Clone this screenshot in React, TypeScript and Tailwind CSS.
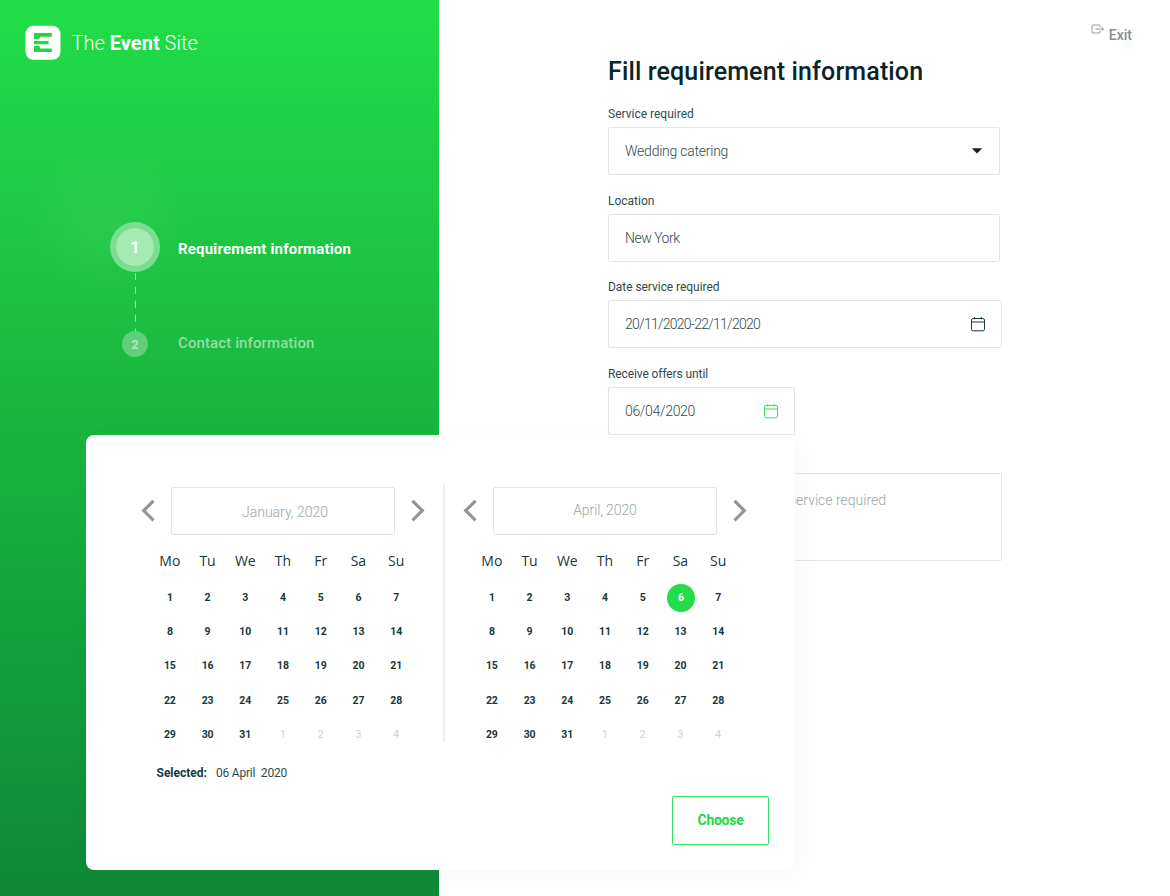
import type { ReactNode } from "react";

const weekdays = ["Mo", "Tu", "We", "Th", "Fr", "Sa", "Su"];
const days = Array.from({ length: 35 }, (_, i) => (i < 31 ? i + 1 : i - 30));

function LogoMark() {
  return (
    <svg width="36" height="35" viewBox="0 0 36 35" className="block shrink-0">
      <rect x="0.5" y="0.8" width="35" height="34" rx="8" fill="#fff" />
      <path
        d="M9 8H26.8V11.8H15.3L14.2 14.2H9ZM9 15.9H23.6V19.3H9ZM9 20.9H14.2L15.3 23.5H26.8V27.1H9Z"
        fill="#22d546"
      />
    </svg>
  );
}

function CalendarIcon({ className }: { className: string }) {
  return (
    <svg width="16" height="16" viewBox="0 0 16 16" fill="none" stroke="currentColor" className={className}>
      <rect x="1.5" y="2.5" width="13" height="12.3" rx="1.6" strokeWidth="1" />
      <path d="M1.5 6H14.5M4.7 1V3.4M11.3 1V3.4" strokeWidth="1" />
    </svg>
  );
}

function Chevron({ next }: { next?: boolean }) {
  return (
    <svg width="14" height="22" viewBox="0 0 14 22" fill="none" stroke="#9b948e" strokeWidth="3.2" className="block shrink-0">
      <path d={next ? "M1.5 0.8L11.3 10.6L1.5 20.4" : "M12.5 0.8L2.7 10.6L12.5 20.4"} />
    </svg>
  );
}

function Field({ label, labelClass, className, children }: { label: string; labelClass: string; className: string; children: ReactNode }) {
  return (
    <div className="mb-[12.5px]">
      <div className={`h-[26px] pt-[4px] text-[12px] leading-[18px] text-[#304a4c] ${labelClass}`}>{label}</div>
      <div className={`flex h-[48px] items-center justify-between rounded-[2px] border border-[#e3e5e5] pl-[16px] text-[14px] leading-5 font-light text-[#304a4c] ${className}`}>
        {children}
      </div>
    </div>
  );
}

function Month({ title, titleClass, selected }: { title: string; titleClass: string; selected?: number }) {
  return (
    <div className="w-[284px]">
      <div className="flex items-center justify-between">
        <Chevron />
        <div className={`flex h-[48px] w-[224px] items-center justify-center rounded-[2px] border border-[#e3e5e5] text-[14px] font-light text-[#98a5a5] ${titleClass}`}>
          {title}
        </div>
        <Chevron next />
      </div>
      <div className="ml-[10px] grid w-[264px] grid-cols-7 pt-[9px] text-center">
        {weekdays.map((d) => (
          <div key={d} className="h-[37px] pt-[7px] font-['Open_Sans',sans-serif] text-[14px] leading-5 font-medium text-[#18383b]">
            {d}
          </div>
        ))}
        {days.map((d, i) => (
          <div key={i} className={`flex h-[34.25px] items-center justify-center text-[10.5px] tracking-[-0.1px] ${i > 30 ? "font-normal text-[#ccd2d2]" : "font-bold text-[#18383b]"}`}>
            {selected === i ? (
              <span className="ml-px flex size-7 shrink-0 items-center justify-center rounded-full bg-[#22dc48] text-white">{d}</span>
            ) : (
              d
            )}
          </div>
        ))}
      </div>
    </div>
  );
}

export default function App() {
  return (
    <div className="relative flex h-[896px] w-[1170px] overflow-hidden bg-white font-['Roboto',sans-serif]">
      <aside className="h-full w-[439px] shrink-0 bg-[radial-gradient(circle_at_108px_222px,rgba(255,255,255,0.055),transparent_80px),linear-gradient(#22dd48,#0e8936)] text-white">
        <div className="flex items-center pt-[25px] pl-[25px]">
          <LogoMark />
          <span className="ml-[10.5px] text-[20px] leading-8 font-light tracking-[0.03px] whitespace-pre">
            The <b className="font-bold">Event</b> Site
          </span>
        </div>
        <div className="mt-[162px] ml-[110px] flex items-start">
          <div className="flex w-[50px] flex-col items-center">
            <div className="flex size-[50px] items-center justify-center rounded-full bg-[#7cdd91]">
              <div className="flex size-[38px] items-center justify-center rounded-full bg-[#a5e9b3] pt-px text-[16px] font-bold">1</div>
            </div>
            <svg width="1" height="59" viewBox="0 0 1 59" className="ml-px block">
              <path d="M0.5 1V59" stroke="#9be3a9" strokeWidth="1" strokeDasharray="7 6.9" />
            </svg>
            <div className="flex size-[26px] items-center justify-center rounded-full bg-[#60cf79] pt-px text-[12px] font-bold text-[#b2e8bc]">2</div>
          </div>
          <div className="ml-[18px] pt-[17px] text-[15px] leading-5">
            <div className="font-bold tracking-[0.18px]">Requirement information</div>
            <div className="mt-[74px] font-medium tracking-[0.11px] text-[#93dda2]">Contact information</div>
          </div>
        </div>
      </aside>

      <main className="flex-1 pl-[169px]">
        <h1 className="h-[101px] pt-[55px] text-[25px] leading-[34px] font-medium tracking-[0.14px] text-[#07262a]">Fill requirement information</h1>
        <Field label="Service required" labelClass="" className="w-[392px]">
          <span className="tracking-[-0.24px]">Wedding catering</span>
          <svg width="12" height="6" viewBox="0 0 12 6" className="mr-[16px]">
            <path d="M0.8 0.3H11.2L6 5.5Z" fill="#241c10" />
          </svg>
        </Field>
        <Field label="Location" labelClass="" className="w-[392px]">
          <span className="tracking-[-0.5px]">New York</span>
        </Field>
        <Field label="Date service required" labelClass="tracking-[-0.05px]" className="w-[394px]">
          <span className="tracking-[-0.74px]">20/11/2020-22/11/2020</span>
          <CalendarIcon className="mr-[15px] text-[#18383b]" />
        </Field>
        <Field label="Receive offers until" labelClass="tracking-[-0.1px]" className="w-[187px]">
          <span className="tracking-[-0.33px]">06/04/2020</span>
          <CalendarIcon className="mr-[15px] text-[#3bdc5c]" />
        </Field>
        <div className="mt-[38.5px] flex h-[87.5px] w-[394px] justify-end rounded-[2px] border border-[#e3e5e5] pt-4 pr-[115px] text-[14px] leading-5 font-light text-[#98a5a5]">
          service required
        </div>
      </main>

      <a className="absolute top-[24px] right-[38px] flex items-start text-[14px] leading-[23px] font-medium text-[#839192]">
        <svg width="14" height="10" viewBox="0 0 14 10" fill="none" stroke="currentColor" strokeWidth="0.9" className="mr-[4px]">
          <path d="M9 3V1.7Q9 1 8.3 1H2Q1 1 1 2V8Q1 9 2 9H8.3Q9 9 9 8.3V7M4.5 5H12.5M10.6 3.2L12.5 5L10.6 6.8" />
        </svg>
        Exit
      </a>

      <section className="absolute top-[435px] left-[86px] flex h-[435px] w-[709px] flex-col rounded-[8px] bg-white shadow-[4px_4px_20px_rgba(90,90,160,0.045)]">
        <div className="flex pt-[51.5px] pl-[55px]">
          <Month title="January, 2020" titleClass="pl-1 pt-[3px]" />
          <div className="mt-[-1.5px] mr-[18px] ml-[18px] h-[257px] w-[2px] bg-[#efefef]" />
          <Month title="April, 2020" titleClass="tracking-[-0.1px]" selected={5} />
        </div>
        <div className="absolute top-[328px] left-[70.5px] flex text-[12px] leading-5 text-[#304a4c]">
          <b className="font-bold text-[#18383b]">Selected:</b>
          <span className="ml-[9px] font-normal tracking-[-0.2px] whitespace-pre">06 April  2020</span>
        </div>
        <button className="absolute right-[26px] bottom-[25px] h-[49px] w-[97px] rounded-[2px] border border-[#3bdc5c] text-[14px] font-bold tracking-[-0.25px] text-[#22d848]">
          Choose
        </button>
      </section>
    </div>
  );
}
